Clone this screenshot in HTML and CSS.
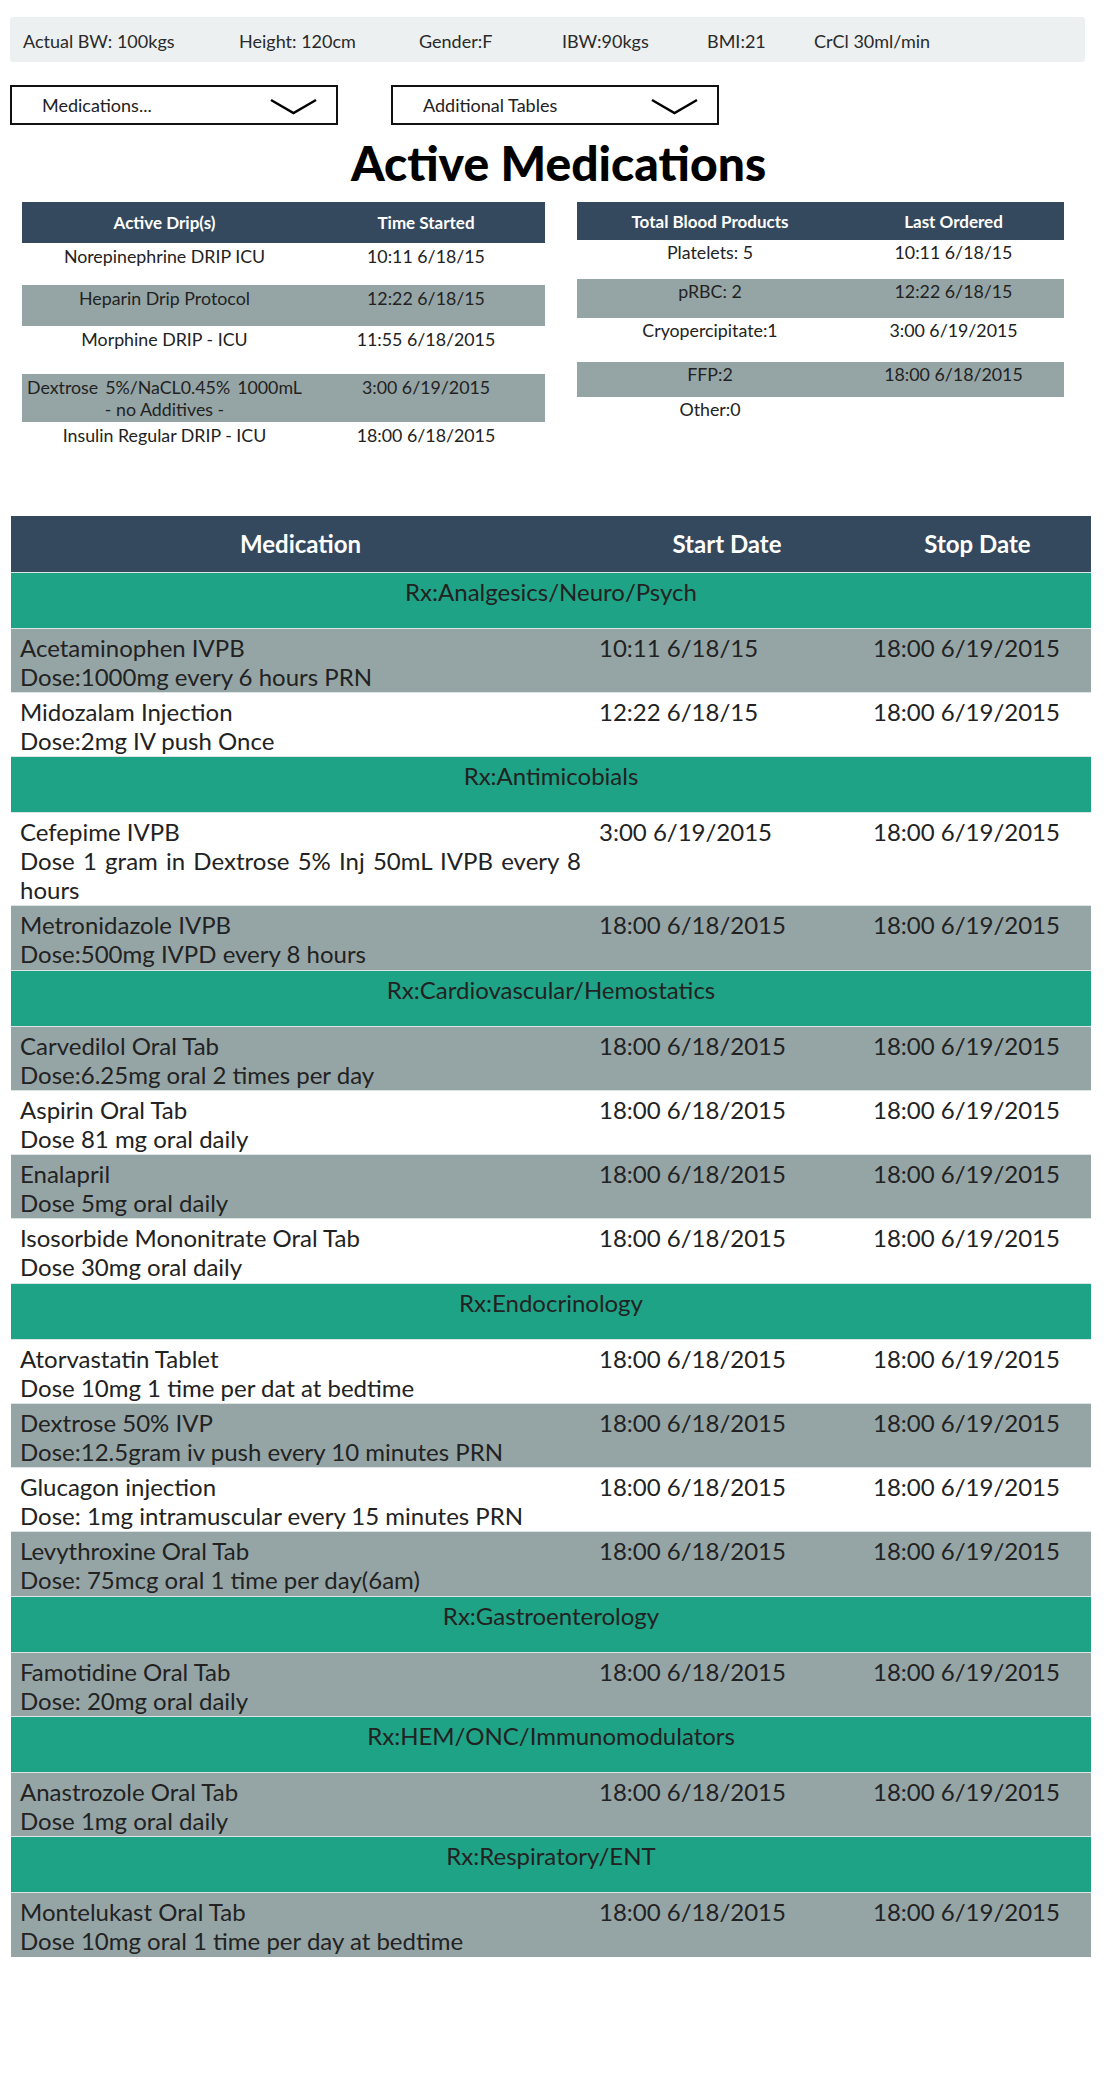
FILE: index.html
```html
<!DOCTYPE html>
<html lang="en">
<head>
<meta charset="utf-8">
<title>Active Medications</title>
<link rel="stylesheet" href="styles.css">
</head>
<body>
<div class="page">
  <div class="vitals">
    <span>Actual BW: 100kgs</span>
    <span>Height: 120cm</span>
    <span>Gender:F</span>
    <span>IBW:90kgs</span>
    <span>BMI:21</span>
    <span>CrCl 30ml/min</span>
  </div>

  <div class="selectors">
    <div class="select">
      <span class="label">Medications...</span>
      <svg class="chev" viewBox="0 0 47 17"><polyline points="1,2 23.5,15 46,2" fill="none" stroke="#000" stroke-width="2.4" stroke-linejoin="miter"/></svg>
    </div>
    <div class="select">
      <span class="label">Additional Tables</span>
      <svg class="chev" viewBox="0 0 47 17"><polyline points="1,2 23.5,15 46,2" fill="none" stroke="#000" stroke-width="2.4" stroke-linejoin="miter"/></svg>
    </div>
  </div>

  <h1 class="title">Active Medications</h1>

  <div class="summary">
    <table class="mini drips">
      <colgroup><col class="d1"><col class="d2"></colgroup>
      <tr class="hd"><th>Active Drip(s)</th><th>Time Started</th></tr>
      <tr class="h42"><td>Norepinephrine DRIP ICU</td><td>10:11 6/18/15</td></tr>
      <tr class="h41 alt"><td>Heparin Drip Protocol</td><td>12:22 6/18/15</td></tr>
      <tr class="h48"><td>Morphine DRIP - ICU</td><td>11:55 6/18/2015</td></tr>
      <tr class="h48 alt"><td class="just">Dextrose 5%/NaCL0.45% 1000mL <span class="nw">- no Additives -</span></td><td>3:00 6/19/2015</td></tr>
      <tr class="h42"><td>Insulin Regular DRIP - ICU</td><td>18:00 6/18/2015</td></tr>
    </table>

    <table class="mini blood">
      <colgroup><col class="b1"><col class="b2"></colgroup>
      <tr class="hd"><th>Total Blood Products</th><th>Last Ordered</th></tr>
      <tr class="h39"><td>Platelets: 5</td><td>10:11 6/18/15</td></tr>
      <tr class="h39 alt"><td>pRBC: 2</td><td>12:22 6/18/15</td></tr>
      <tr class="h44"><td>Cryopercipitate:1</td><td>3:00 6/19/2015</td></tr>
      <tr class="h35 alt"><td>FFP:2</td><td>18:00 6/18/2015</td></tr>
      <tr class="h40"><td>Other:0</td><td></td></tr>
    </table>
  </div>

  <table class="meds">
    <colgroup><col class="m1"><col class="m2"><col class="m3"></colgroup>
    <tr class="head"><th>Medication</th><th>Start Date</th><th>Stop Date</th></tr>

    <tr class="cat"><td colspan="3">Rx:Analgesics/Neuro/Psych</td></tr>
    <tr class="alt"><td class="med">Acetaminophen IVPB<br>Dose:1000mg every 6 hours PRN</td><td>10:11 6/18/15</td><td>18:00 6/19/2015</td></tr>
    <tr><td class="med">Midozalam Injection<br>Dose:2mg IV push Once</td><td>12:22 6/18/15</td><td>18:00 6/19/2015</td></tr>

    <tr class="cat"><td colspan="3">Rx:Antimicobials</td></tr>
    <tr><td class="med">Cefepime IVPB<br>Dose 1 gram in Dextrose 5% Inj 50mL IVPB every 8 hours</td><td>3:00 6/19/2015</td><td>18:00 6/19/2015</td></tr>
    <tr class="alt"><td class="med">Metronidazole IVPB<br>Dose:500mg IVPD every 8 hours</td><td>18:00 6/18/2015</td><td>18:00 6/19/2015</td></tr>

    <tr class="cat"><td colspan="3">Rx:Cardiovascular/Hemostatics</td></tr>
    <tr class="alt"><td class="med">Carvedilol Oral Tab<br>Dose:6.25mg oral 2 times per day</td><td>18:00 6/18/2015</td><td>18:00 6/19/2015</td></tr>
    <tr><td class="med">Aspirin Oral Tab<br>Dose 81 mg oral daily</td><td>18:00 6/18/2015</td><td>18:00 6/19/2015</td></tr>
    <tr class="alt"><td class="med">Enalapril<br>Dose 5mg oral daily</td><td>18:00 6/18/2015</td><td>18:00 6/19/2015</td></tr>
    <tr><td class="med">Isosorbide Mononitrate Oral Tab<br>Dose 30mg oral daily</td><td>18:00 6/18/2015</td><td>18:00 6/19/2015</td></tr>

    <tr class="cat"><td colspan="3">Rx:Endocrinology</td></tr>
    <tr><td class="med">Atorvastatin Tablet<br>Dose 10mg 1 time per dat at bedtime</td><td>18:00 6/18/2015</td><td>18:00 6/19/2015</td></tr>
    <tr class="alt"><td class="med">Dextrose 50% IVP<br>Dose:12.5gram iv push every 10 minutes PRN</td><td>18:00 6/18/2015</td><td>18:00 6/19/2015</td></tr>
    <tr><td class="med">Glucagon injection<br>Dose: 1mg intramuscular every 15 minutes PRN</td><td>18:00 6/18/2015</td><td>18:00 6/19/2015</td></tr>
    <tr class="alt"><td class="med">Levythroxine Oral Tab<br>Dose: 75mcg oral 1 time per day(6am)</td><td>18:00 6/18/2015</td><td>18:00 6/19/2015</td></tr>

    <tr class="cat"><td colspan="3">Rx:Gastroenterology</td></tr>
    <tr class="alt"><td class="med">Famotidine Oral Tab<br>Dose: 20mg oral daily</td><td>18:00 6/18/2015</td><td>18:00 6/19/2015</td></tr>

    <tr class="cat"><td colspan="3">Rx:HEM/ONC/Immunomodulators</td></tr>
    <tr class="alt"><td class="med">Anastrozole Oral Tab<br>Dose 1mg oral daily</td><td>18:00 6/18/2015</td><td>18:00 6/19/2015</td></tr>

    <tr class="cat"><td colspan="3">Rx:Respiratory/ENT</td></tr>
    <tr class="alt"><td class="med">Montelukast Oral Tab<br>Dose 10mg oral 1 time per day at bedtime</td><td>18:00 6/18/2015</td><td>18:00 6/19/2015</td></tr>
  </table>
</div>
</body>
</html>
```

FILE: styles.css
```css
* { box-sizing: border-box; }

body {
  margin: 0;
  background: #fff;
  color: #222;
  font-family: "Lato", "Open Sans", "Liberation Sans", sans-serif;
}

.page {
  width: 1117px;
  padding: 17px 10px 40px 10px;
}

/* patient vitals bar */
.vitals {
  width: 1075px;
  height: 45px;
  background: #ecf0f1;
  border-radius: 3px;
  display: grid;
  grid-template-columns: 216px 180px 143px 145px 107px auto;
  align-items: center;
  padding: 2px 0 0 13px;
  font-size: 18px;
  color: #2a2a2a;
}

/* dropdown selectors */
.selectors {
  display: flex;
  gap: 53px;
  margin-top: 23px;
}

.select {
  width: 328px;
  height: 40px;
  border: 2px solid #111;
  display: flex;
  align-items: center;
  padding: 0 19px 0 30px;
  font-size: 18px;
  color: #222;
}

.select .label { flex: 1; }

.chev {
  width: 47px;
  height: 17px;
  display: block;
  margin-top: 2px;
}

.title {
  margin: 10px 0 0;
  text-align: center;
  font-size: 48px;
  line-height: 56px;
  font-weight: 900;
  color: #000;
}

/* summary tables */
.summary {
  display: flex;
  align-items: flex-start;
  gap: 32px;
  margin-top: 11px;
  padding-left: 12px;
}

.mini {
  border-collapse: collapse;
  table-layout: fixed;
  font-size: 17.8px;
  text-align: center;
  color: #222;
}

.mini th {
  background: #34495e;
  color: #fff;
  font-weight: 700;
  font-size: 17px;
  padding: 0;
  vertical-align: middle;
}

.mini td {
  vertical-align: top;
  padding: 2px 5px 0;
}

.mini tr.alt td { background: #95a5a6; }

.mini td.just {
  text-align: justify;
  text-align-last: center;
}

.mini .nw { white-space: nowrap; }

.drips { width: 523px; }
.drips col.d1 { width: 285px; }
.drips col.d2 { width: 238px; }
.drips tr.hd { height: 41px; }

.blood { width: 487px; }
.blood col.b1 { width: 266px; }
.blood col.b2 { width: 221px; }
.blood tr.hd { height: 38px; }
.blood td { padding-top: 1px; }

.h35 { height: 35px; }
.h39 { height: 39px; }
.h40 { height: 40px; }
.h41 { height: 41px; }
.h42 { height: 42px; }
.h44 { height: 44px; }
.h48 { height: 48px; }

/* main medication table */
.meds {
  width: 1080px;
  margin: 52px 0 0 1px;
  border-collapse: collapse;
  table-layout: fixed;
  font-size: 24px;
  line-height: 29px;
  color: #222;
}

.meds col.m1 { width: 579px; }
.meds col.m2 { width: 274px; }
.meds col.m3 { width: 227px; }

.meds tr.head th {
  height: 56px;
  background: #34495e;
  color: #fff;
  font-weight: 700;
  text-align: center;
  vertical-align: middle;
  padding: 0;
}

.meds td {
  vertical-align: top;
  padding: 4px 9px 1.2px;
  border-top: 1px solid #dde4e4;
  text-align: left;
}

.meds td.med { text-align: justify; }

.meds tr.alt td { background: #95a5a6; }

.meds tr.cat td {
  background: #1fa386;
  text-align: center;
  padding: 4px 0 22.2px;
  color: #222;
}
```
